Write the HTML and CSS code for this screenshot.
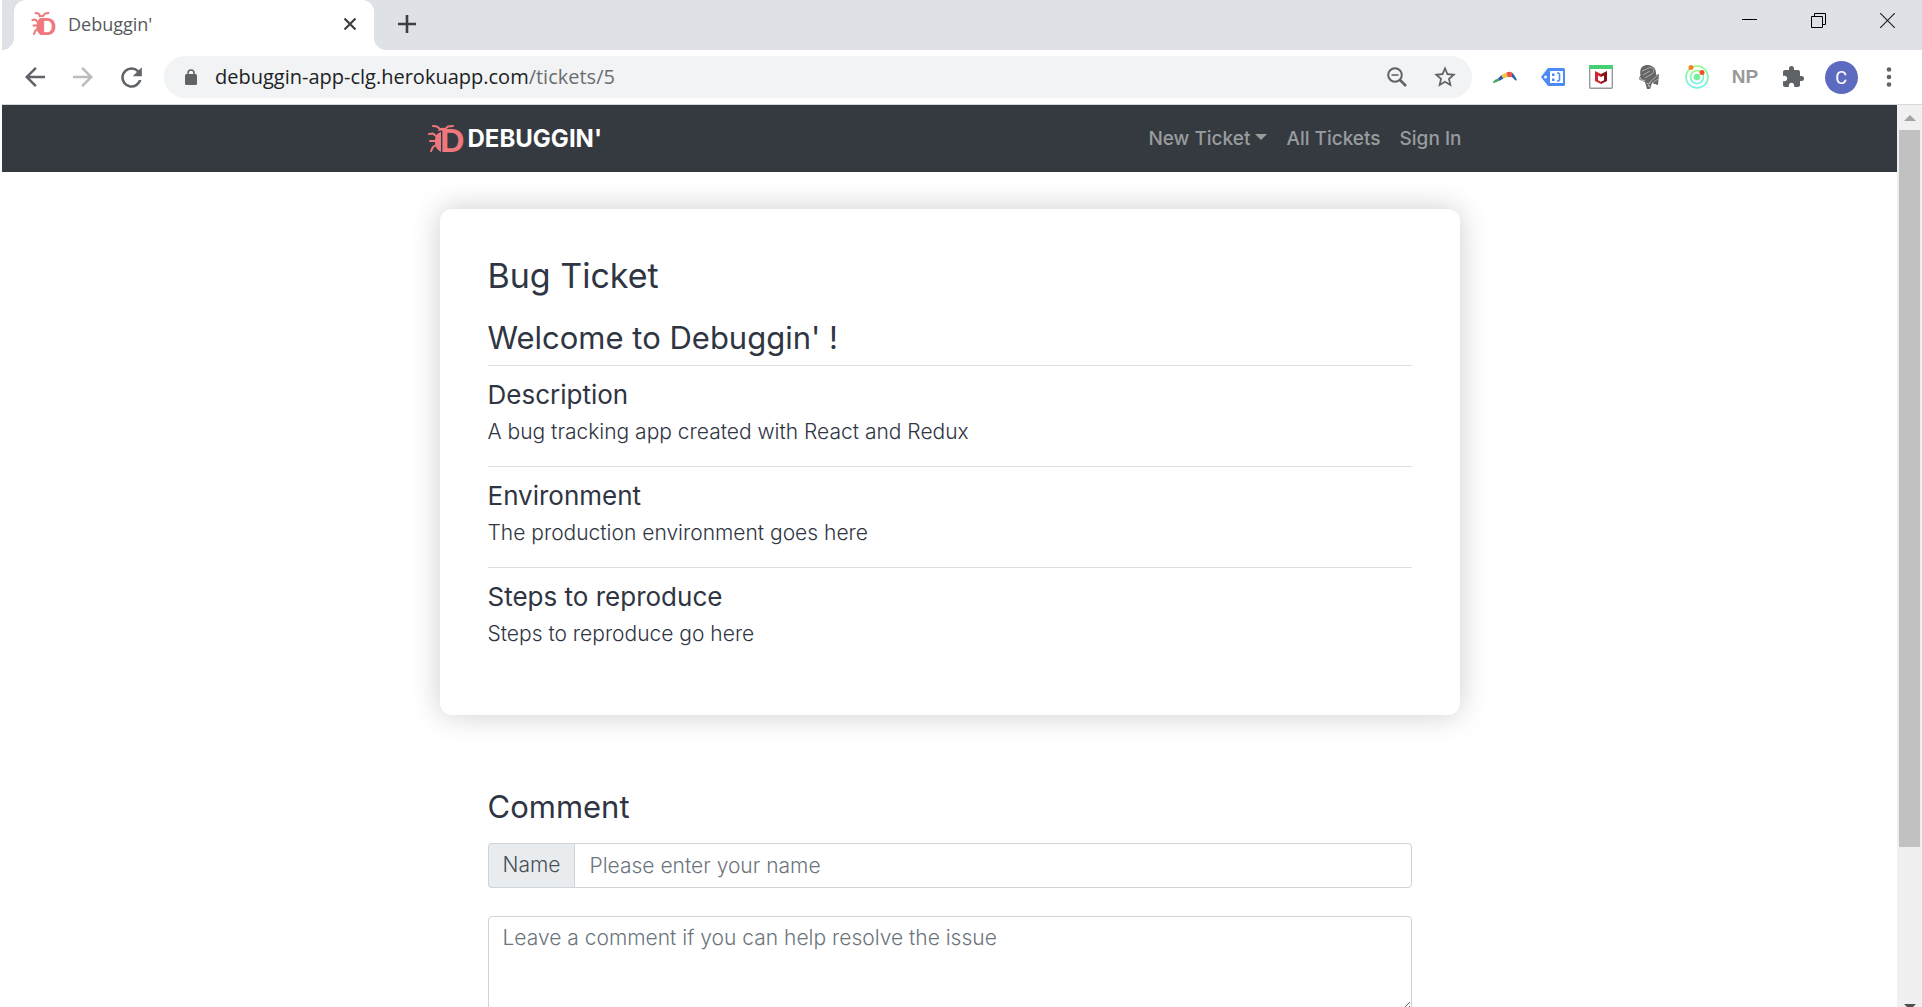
FILE: index.html
```html
<!DOCTYPE html>
<html lang="en">
<head>
<meta charset="utf-8">
<title>Debuggin'</title>
<link rel="stylesheet" href="styles.css">
</head>
<body>
<div class="window">
  <header class="tabs">
    <div class="tab">
      <svg class="favicon" viewBox="0 0 24 24" aria-hidden="true">
        <path class="bug-legs" d="M8 4 6.500 1.500 3.500 1M11 4l2-2.500 3.500-.5M5 9.500 3.500 7.500.5 8M5 13.500H1.500M5.500 17l-2 1.500L2 22"/>
        <path class="bug-body" d="M9 6v17C5.500 21 4.500 18 4.500 14c0-4 1.500-7 4.500-8zM6.500 5.500c1-3 5-3 6-1z"/>
        <text class="favicon-letter" x="7" y="23">D</text>
      </svg>
      <span class="tab-title">Debuggin'</span>
      <button class="plain" aria-label="Close tab"><svg width="14" height="14" viewBox="0 0 14 14"><path d="M1.500 1.500l11 11m0-11l-11 11" stroke="#3c4043" stroke-width="2.200"/></svg></button>
    </div>
    <button class="plain new-tab" aria-label="New tab"><svg width="18" height="18" viewBox="0 0 18 18"><path d="M9 0v18M0 9h18" stroke="#3c4043" stroke-width="2.600"/></svg></button>
    <div class="controls">
      <button class="plain" aria-label="Minimize"><svg width="15" height="15" viewBox="0 0 15 15"><path d="M0 6.500h15" stroke="#000"/></svg></button>
      <button class="plain" aria-label="Restore"><svg width="15" height="15" viewBox="0 0 15 15"><path d="M.5 3.500h11v11H.5zM3.500 3.500v-3h11v11h-3" fill="none" stroke="#000"/></svg></button>
      <button class="plain" aria-label="Close"><svg width="15" height="15" viewBox="0 0 15 15"><path d="M0 0l15 15M15 0L0 15" stroke="#222" stroke-width="1.200"/></svg></button>
    </div>
  </header>
  <div class="toolbar">
    <button class="plain" aria-label="Back"><svg width="30" height="30" viewBox="0 0 24 24"><path fill="#5f6368" d="M20 11H7.830l5.590-5.590L12 4l-8 8 8 8 1.410-1.410L7.830 13H20v-2z"/></svg></button>
    <button class="plain" aria-label="Forward"><svg width="30" height="30" viewBox="0 0 24 24"><path fill="#babcbe" d="M12 4l-1.410 1.410L16.170 11H4v2h12.170l-5.580 5.590L12 20l8-8z"/></svg></button>
    <button class="plain" aria-label="Reload"><svg width="31" height="31" viewBox="0 0 24 24"><path fill="#5f6368" d="M17.650 6.350A7.958 7.958 0 0 0 12 4a8 8 0 1 0 7.730 10h-2.080A6 6 0 1 1 12 6c1.660 0 3.140.69 4.220 1.780L13 11h7V4l-2.350 2.350z"/></svg></button>
    <div class="omnibox">
      <svg width="12" height="16" viewBox="0 0 12 16"><path d="M3 7V4a3 3 0 0 1 6 0v3" fill="none" stroke="#5f6368" stroke-width="1.500"/><rect y="5" width="12" height="11" rx="1.500" fill="#5f6368"/></svg>
      <span class="url">debuggin-app-clg.herokuapp.com<span class="path">/tickets/5</span></span>
      <button class="plain" aria-label="Zoom"><svg width="20" height="20" viewBox="0 0 20 20"><g fill="none" stroke="#5f6368" stroke-width="2"><circle cx="8" cy="8" r="6.800"/><path d="M4.500 8h7" stroke-width="1.600"/><path d="M13 13l6 6" stroke-width="2.600"/></g></svg></button>
      <button class="plain" aria-label="Bookmark this page"><svg width="26" height="26" viewBox="0 0 24 24"><path fill="#5f6368" d="M22 9.240l-7.190-.62L12 2 9.190 8.630 2 9.240l5.460 4.730L5.820 21 12 17.270 18.180 21l-1.630-7.030L22 9.240zM12 15.400l-3.760 2.270 1-4.280-3.320-2.880 4.380-.38L12 6.100l1.710 4.040 4.380.38-3.320 2.880 1 4.280L12 15.400z"/></svg></button>
    </div>
    <button class="plain" aria-label="Boomerang"><svg width="24" height="24" viewBox="0 0 24 24"><path d="M0 18c0-2 3-4 5-4.500l1 2.500c-2 .5-4 2-6 2z" fill="#43a559"/><path d="M5 13.500L8.500 10l2 3.500L6 16z" fill="#2a5fa8"/><path d="M8.500 10l5-2.500 1 4.500-4 1.500z" fill="#f8c33c"/><path d="M13.500 7.500c2-1 4-1 5.500 0v4.500h-4.500z" fill="#e8574a"/><path d="M19 7.500c2 2 4 5 5 8-1.500.5-3-1.500-5-3.500z" fill="#2a5fa8"/></svg></button>
    <button class="plain" aria-label="Tag Assistant"><svg width="24" height="24" viewBox="0 0 24 24"><path d="M7 3h15.500A1.500 1.500 0 0 1 24 4.500v15a1.500 1.500 0 0 1-1.500 1.500H7l-7-9z" fill="#4c8bf5"/><path d="M9 6h13v12H9z" fill="#fff"/><circle cx="4.500" cy="12" r="1.500" fill="#fff"/><path d="M11 8.500h2.500V11H11zM11 13.500h2.500V16H11z" fill="#4c8bf5"/><path d="M16 8h1.500l1 1v6l-1 1H16" fill="none" stroke="#4c8bf5" stroke-width="1.600"/></svg></button>
    <button class="plain" aria-label="McAfee"><svg width="24" height="24" viewBox="0 0 24 24"><rect x=".7" y=".7" width="22.600" height="22.600" rx="1" fill="#fff" stroke="#999" stroke-width="1.400"/><path d="M0 0h24v4H0z" fill="#46cf73"/><path d="M6 6l6 3v3l-3-1.500v4.800l3 1.400V19l-6-3z" fill="#d2232a"/><path d="M18 6l-6 3v3l3-1.500v4.800l-3 1.400V19l6-3z" fill="#87141a"/></svg></button>
    <button class="plain" aria-label="Head tool"><svg width="20" height="25" viewBox="0 0 20 25"><path d="M3 2C7-1 13-.5 16 4c1 2 1 4 1 6l3-1-1 11-6-2-2 6H8l-2-7-5-2c-1.500-1-1-3 .5-4.500C1 7 1 4 3 2z" fill="#666"/><path d="M3 6l8-3.500c4 0 5 4 2 6.500l-7 4M4 10l7-4M11 17l8-7M13 18l6-4" fill="none" stroke="#aaa"/><path d="M1 12c0 3 3 4 5 3M8 18c1 2 3 1 3-1M9 21h2" fill="none" stroke="#ddd"/></svg></button>
    <button class="plain" aria-label="Orbit tool"><svg width="24" height="24" viewBox="0 0 24 24"><defs><linearGradient id="orbit" x2="0" y2="1"><stop stop-color="#8dff7d"/><stop offset="1" stop-color="#72eee8"/></linearGradient></defs><g fill="none" stroke="url(#orbit)" stroke-width="1.600"><circle cx="12" cy="12" r="11"/><circle cx="12" cy="12" r="6.500"/></g><circle cx="12" cy="12" r="3.300" fill="#72f0a0"/><circle cx="6" cy="2.500" r="2.500" fill="#f58220"/><circle cx="17" cy="7.500" r="2.500" fill="#ee4e2b"/></svg></button>
    <button class="plain np">NP</button>
    <button class="plain" aria-label="Extensions"><svg width="24" height="24" viewBox="0 0 24 24"><path fill="#5f6368" d="M20.500 11H19V7c0-1.100-.9-2-2-2h-4V3.500a2.500 2.500 0 0 0-5 0V5H4c-1.100 0-1.990.9-1.990 2v3.800H3.500c1.490 0 2.700 1.210 2.700 2.700s-1.210 2.700-2.700 2.700H2V20c0 1.100.9 2 2 2h3.800v-1.500c0-1.490 1.210-2.700 2.700-2.700s2.700 1.210 2.700 2.700V22H17c1.100 0 2-.9 2-2v-4h1.500a2.500 2.500 0 0 0 0-5z"/></svg></button>
    <button class="plain"><span class="avatar">C</span></button>
    <button class="plain" aria-label="Menu"><svg width="6" height="20" viewBox="0 0 6 20" fill="#5f6368"><circle cx="3" cy="2.500" r="2.300"/><circle cx="3" cy="10" r="2.300"/><circle cx="3" cy="17.500" r="2.300"/></svg></button>
  </div>
  <div class="viewport">
    <div class="page">
      <nav class="navbar">
        <div class="nav-inner">
          <a class="brand" href="#">
            <svg class="logo" viewBox="0 0 36 28" aria-hidden="true">
              <path class="bug-legs" d="M12 4 9 1.500 5 1M17 4l3-2.500 5-.5M8 11 5 8.500 1 9M7 16H2M8 20l-3 2-2 4"/>
              <path class="bug-body" d="M13 7v20C8 24 7 21 7 16c0-5 2-8 6-9zM10 6c1-4 8-4 9-1z"/>
              <text class="logo-letter" x="12" y="27">D</text>
            </svg>
            DEBUGGIN'
          </a>
          <div class="links">
            <a class="dropdown" href="#">New Ticket</a>
            <a href="#">All Tickets</a>
            <a href="#">Sign In</a>
          </div>
        </div>
      </nav>
      <main class="container">
        <article class="card">
          <h1>Bug Ticket</h1>
          <h2>Welcome to Debuggin' !</h2>
          <section>
            <h3>Description</h3>
            <p>A bug tracking app created with React and Redux</p>
          </section>
          <section>
            <h3>Environment</h3>
            <p>The production environment goes here</p>
          </section>
          <section>
            <h3>Steps to reproduce</h3>
            <p>Steps to reproduce go here</p>
          </section>
        </article>
        <form class="comment">
          <h2>Comment</h2>
          <div class="group">
            <label for="name">Name</label>
            <input id="name" type="text" placeholder="Please enter your name">
          </div>
          <textarea aria-label="Comment" placeholder="Leave a comment if you can help resolve the issue"></textarea>
        </form>
      </main>
    </div>
    <div class="scrollbar" aria-hidden="true">
      <svg width="12" height="6" viewBox="0 0 12 6"><path d="M6 0l6 6H0z" fill="#a3a3a3"/></svg>
      <div class="track"><div class="thumb"></div></div>
      <svg width="12" height="6" viewBox="0 0 12 6"><path d="M0 0h12L6 6z" fill="#505050"/></svg>
    </div>
  </div>
</div>
</body>
</html>
```
FILE: styles.css
```css
* { box-sizing: border-box; }

body {
  margin: 0;
  background: #fff;
  color: #2f3542;
  font: 300 21px/30px Inter, sans-serif;
}

h1, h2, h3, p { margin: 0; }
h1, h2, h3 { font-weight: 400; }
a { text-decoration: none; }

/* Bug mark, shared by the favicon and the brand */
.bug-legs {
  fill: none;
  stroke: #f0787c;
  stroke-width: 2px;
  stroke-linecap: round;
  stroke-linejoin: round;
}
.bug-body { fill: #f0787c; }
.favicon-letter { font: 700 24px "Liberation Sans", sans-serif; fill: #f0787c; }
.logo-letter { font: 700 34px "Liberation Sans", sans-serif; fill: #f0787c; }

.window {
  display: flex;
  flex-direction: column;
  height: 100vh;
  overflow: hidden;
  padding-left: 2px;
}

.plain {
  display: flex;
  align-items: center;
  justify-content: center;
  flex: none;
  width: 48px;
  padding: 0;
  border: 0;
  background: none;
}

/* Tab strip */
.tabs {
  display: flex;
  flex: none;
  height: 50px;
  padding-left: 12px;
  background: #dee1e6;
}
.tab {
  position: relative;
  display: flex;
  align-items: center;
  width: 360px;
  height: 50px;
  padding: 0 0 2px 18px;
  border-radius: 12px 12px 0 0;
  background: #fff;
}
.tab::before, .tab::after {
  content: "";
  position: absolute;
  bottom: 0;
  width: 12px;
  height: 12px;
}
.tab::before { left: -12px; background: radial-gradient(circle at 0 0, #dee1e6 12px, #fff 12px); }
.tab::after { right: -12px; background: radial-gradient(circle at 100% 0, #dee1e6 12px, #fff 12px); }
.favicon { width: 24px; height: 24px; margin-right: 12px; overflow: visible; }
.tab-title {
  flex: 1;
  color: #55595c;
  font: 400 18px/24px "Open Sans", sans-serif;
}
.new-tab { height: 48px; margin-left: 9px; }
.controls { display: flex; height: 40px; margin-left: auto; }
.controls .plain { width: 69px; }

/* Toolbar */
.toolbar {
  display: flex;
  align-items: center;
  flex: none;
  height: 55px;
  padding: 0 9px;
  border-bottom: 1px solid #d5d7da;
}
.omnibox {
  display: flex;
  align-items: center;
  flex: 1;
  height: 42px;
  margin: 0 9px;
  padding: 0 3px 0 21px;
  border-radius: 21px;
  background: #f1f3f4;
}
.url {
  flex: 1;
  margin-left: 18px;
  color: #202124;
  font: 400 20px/28px "Open Sans", sans-serif;
}
.path { color: #6a6e72; }
.np { color: #999; font: 700 19px/28px "Liberation Sans Narrow", "Liberation Sans", sans-serif; }
.avatar {
  width: 33px;
  height: 33px;
  border-radius: 50%;
  background: #5c6bc0;
  color: #fff;
  font: 400 18px/33px Roboto, sans-serif;
}

/* Web page */
.viewport { display: flex; flex: 1; min-height: 0; }
.page { flex: 1; overflow: hidden; }
.navbar { padding: 0 34px 0 24px; background: #343a40; }
.nav-inner {
  display: flex;
  align-items: center;
  justify-content: space-between;
  max-width: 1034px;
  height: 67px;
  margin: 0 auto;
}
.brand {
  display: flex;
  align-items: center;
  gap: 4px;
  color: #fff;
  font-size: 24px;
  font-weight: 700;
}
.logo { width: 36px; height: 28px; overflow: visible; }
.links { display: flex; gap: 19px; }
.links a { color: #999c9f; font-size: 19px; font-weight: 500; }
.dropdown::after {
  content: "";
  display: inline-block;
  margin-left: 5px;
  border: 6px solid transparent;
  border-top-color: currentColor;
  border-bottom: 0;
  vertical-align: 5px;
}

.container { max-width: 1020px; margin: 37px auto 0; }
.card {
  padding: 48px 48px 47px;
  border-radius: 12px;
  box-shadow: 0 0 30px rgba(0, 0, 0, .2);
}
h1 { font-size: 34px; line-height: 38px; }
h2 { font-size: 31px; line-height: 36px; }
.card h2 { margin: 25px 0 9px; }
section { height: 101px; padding-top: 11px; border-top: 1px solid #dcdfe0; }
h3 { margin-bottom: 4px; font-size: 26px; line-height: 36px; }

.comment { padding: 74px 48px 0; }
.comment h2 { margin-bottom: 18px; }
.group { display: flex; height: 45px; margin-bottom: 28px; }
.group label {
  padding: 6px 14px;
  border: 1px solid #ced4da;
  border-right: 0;
  border-radius: 4px 0 0 4px;
  background: #e9ecef;
  color: #495057;
}
input, textarea {
  padding: 6px 14px;
  border: 1px solid #ced4da;
  background: #fff;
  color: #495057;
  font: inherit;
}
input { flex: 1; min-width: 0; border-radius: 0 4px 4px 0; }
textarea { display: block; width: 100%; height: 95px; border-radius: 4px; }
::placeholder { color: #6c757d; opacity: 1; }

.scrollbar {
  display: flex;
  flex-direction: column;
  align-items: center;
  flex: none;
  width: 25px;
  padding-top: 10px;
  background: #f0f0f0;
}
.scrollbar svg { flex: none; margin-bottom: 9px; }
.scrollbar svg:last-child { margin-bottom: -3px; }
.track { flex: 1; width: 21px; }
.thumb { height: 82%; background: #c1c1c1; }
```
